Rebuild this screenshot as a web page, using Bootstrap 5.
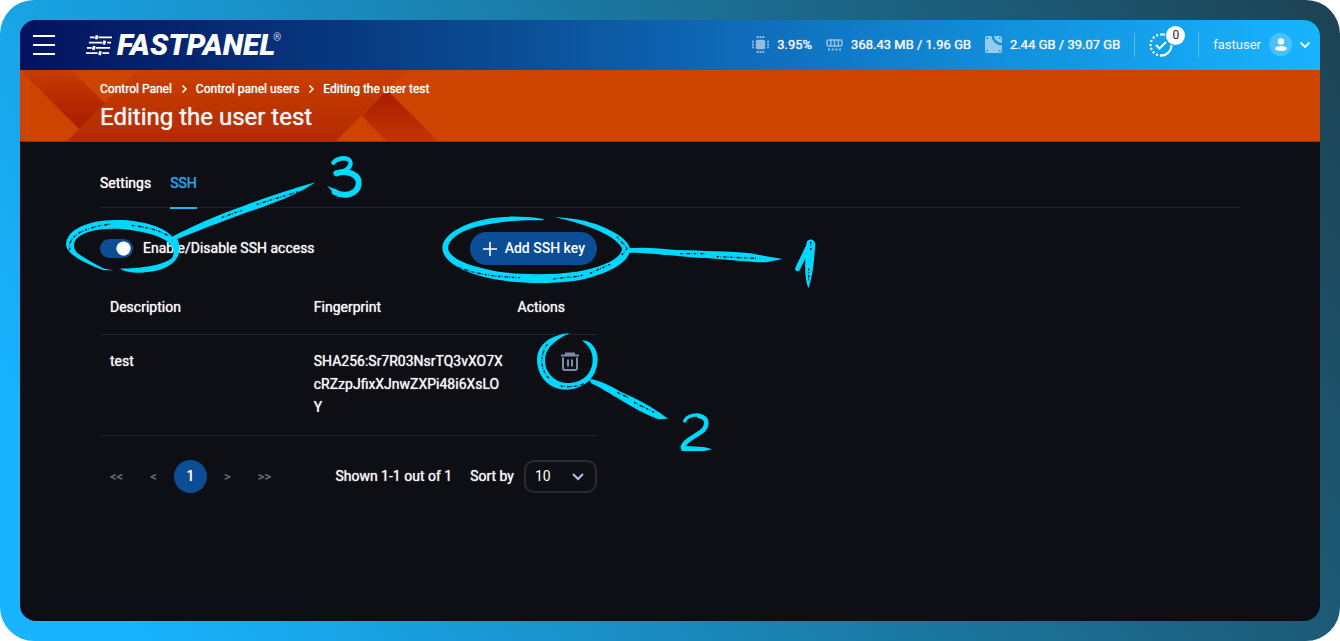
<!DOCTYPE html>
<html lang="en">
<head>
<meta charset="utf-8">
<meta name="viewport" content="width=device-width, initial-scale=1">
<title>Editing the user test</title>
<link href="https://cdn.jsdelivr.net/npm/bootstrap@5.3.0/dist/css/bootstrap.min.css" rel="stylesheet">
<style>
  body { font-family: Roboto, "Liberation Sans", sans-serif; font-size: 14px; font-weight: 400; line-height: 23px; color: #f5f6f8; background: #fff; }
  .frame { min-height: 100vh; padding: 20px; border-radius: 34px; background: linear-gradient(62deg, #18b4ff 8%, #1b77a0 55%, #1d4456 98%); }
  .panel { border-radius: 16px; background: #0e0f14; overflow: hidden; }
  .topbar { height: 50px; padding: 0 10px 1px 13px; font-size: 13px; background: linear-gradient(90deg, #03125e, #0a478c 34%, #0f6cbb 56%, #1292dd 77%, #18b4ff); }
  .wordmark { margin-left: 31px; font-size: 30px; font-weight: 900; font-style: italic; line-height: 32px; color: #fff; text-decoration: none; }
  .wordmark sup { font-size: 10px; font-weight: 400; font-style: normal; top: -14px; margin-left: -2px; opacity: .8; }
  .plain { padding: 0; border: 0; background: none; color: inherit; display: flex; align-items: center; }
  .bold-ink { text-shadow: 0 0 1px currentColor; }
  .stats { gap: 14px; }
  .stat { display: flex; align-items: center; gap: 8px; }
  .stat svg { opacity: .55; }
  .rule { width: 1px; height: 24px; background: rgba(255,255,255,.3); }
  .tasks { margin-right: 11px; }
  .count { position: absolute; left: 17px; top: -7px; width: 19px; height: 19px; border-radius: 50%; background: #fff; color: #222; font-size: 12px; line-height: 19px; text-align: center; }
  .avatar { width: 23px; height: 23px; border-radius: 50%; background: rgba(255,255,255,.22); }
  .banner { height: 72px; padding: 9px 80px 0; background: #cc4400; border-bottom: 1px solid #8f3504; }
  .banner .shapes { position: absolute; left: 0; top: 0; }
  .banner .breadcrumb { font-size: 12px; line-height: 20px; }
  .banner a { color: #fff; text-decoration: none; }
  .banner h1 { font-size: 24px; font-weight: 400; line-height: 36px; }
  .content { padding: 30px 80px 0; }
  .tabs { border-bottom: 1px solid #20232a; gap: 19px; }
  .tabs .nav-link { padding: 0 0 12px; color: #fff; border-bottom: 2px solid transparent; margin-bottom: -2px; }
  .tabs .nav-link.active { color: #22a9f0; border-color: #22b4f5; }
  .keys { max-width: 497px; }
  .access { padding: 0; min-height: 0; margin: 0; gap: 10px; }
  .access .form-check-input { width: 33px; height: 19px; margin: 0; border: 0; float: none; }
  .access .form-check-input:checked { background-color: #0b4e96; background-size: 19px; background-position: right center; }
  .btn-key { height: 33px; padding: 0 12px 0 13px; border-radius: 17px; background: #0b4e96; color: #fff; font-size: 14px; font-weight: 500; line-height: 23px; border: 0; }
  .btn-key:hover { background: #0d5cb0; color: #fff; }
  .keytable { table-layout: fixed; --bs-table-bg: transparent; --bs-table-color: #f5f6f8; border-color: #20232a; }
  .keytable th { font-weight: 400; padding: 15px 10px; }
  .keytable td { padding: 15px 10px 16px; }
  .keytable .print { padding-right: 3px; word-break: break-all; }
  .keytable > tbody { border-top: 0; }
  .pages { gap: 4px; }
  .pages .page-link { width: 33px; height: 33px; padding: 0; border: 0; border-radius: 50%; background: transparent; color: #686e7b; font-size: 13px; line-height: 33px; text-align: center; }
  .pages .active .page-link { background: #0b4e96; color: #fff; font-size: 14px; }
  .sortby { margin: 0 10px 0 18px; }
  .form-select.perpage { width: 73px; height: 33px; padding: 0 9px; border: 2px solid #262b36; border-radius: 10px; color: #fff; font-size: 14px; font-weight: 400; background-color: transparent; background-position: right 10px center; background-size: 14px; background-image: url("data:image/svg+xml,%3Csvg xmlns='http://www.w3.org/2000/svg' viewBox='0 0 14 14'%3E%3Cpath d='M2 4l5 5 5-5' fill='none' stroke='%23b4c4e6' stroke-width='2'/%3E%3C/svg%3E"); }
  .note { position: absolute; pointer-events: none; z-index: 2; max-width: none; overflow: visible; fill: #00d8ff; }
  .note .ink { fill: none; stroke: #00d8ff; stroke-linecap: round; stroke-linejoin: round; }
  .note .grit { fill: none; stroke: #0e1820; stroke-width: 4; stroke-dasharray: 7 4 2 6 11 3 3 5; }
  .note-one { left: -40px; top: -27px; }
  .note-two { left: -54px; top: -25px; }
  .note-three { left: -40px; top: -87px; }
</style>
</head>
<body>
<div class="frame d-flex">
<div class="panel flex-grow-1">
  <header class="topbar d-flex align-items-center">
    <button class="plain" type="button" aria-label="Menu">
      <svg width="22" height="20" fill="none" stroke="#fff" stroke-width="2"><path d="M0 1h22M0 10h22M0 19h22"/></svg>
    </button>
    <a href="#" class="wordmark d-flex align-items-center">
      <svg class="me-1" width="27" height="22" viewBox="0 0 28 22" fill="none" stroke="#fff"><path stroke-width="1.8" d="M4 3h5M13 3h14M3 8.500h14M22 8.500h4M1 14h5M10 14h15M0 19.500h12M17 19.500h7"/><path stroke-width="2.800" d="M11.500 1l-1 4M19.500 6.500l-1 4M8.500 12l-1 4M15 17.500l-1 4"/></svg>
      <span>FASTPANEL<sup>®</sup></span>
    </a>
    <div class="stats ms-auto d-flex align-items-center bold-ink">
      <span class="stat">
        <svg width="17" height="17" viewBox="0 0 18 18" fill="#fff"><rect x="4" y="4" width="10" height="10" rx="2"/><path d="M5 0h2v2H5zM8 0h2v2H8zM11 0h2v2h-2zM5 16h2v2H5zM8 16h2v2H8zM11 16h2v2h-2zM0 5h2v2H0zM0 8h2v2H0zM0 11h2v2H0zM16 5h2v2h-2zM16 8h2v2h-2zM16 11h2v2h-2z"/></svg>
        3.95%
      </span>
      <span class="stat">
        <svg width="17" height="12" viewBox="0 0 17 12" fill="none" stroke="#fff" stroke-width="1.500"><rect x="1" y="1" width="15" height="6" rx="1.500"/><path d="M4.700 1v6M8.500 1v6M12.300 1v6"/><path stroke-width="2" stroke-dasharray="2 1.700" d="M2 10.500h13"/></svg>
        368.43 MB / 1.96 GB
      </span>
      <span class="stat">
        <svg width="17" height="17" viewBox="0 0 17 17"><path fill="#fff" fill-rule="evenodd" d="M2 0h4.500c.5 5 4.500 9 10.500 9.500V15a2 2 0 0 1-2 2H2a2 2 0 0 1-2-2V2a2 2 0 0 1 2-2zM9 0h6a2 2 0 0 1 2 2v5C12.500 6.500 9.500 4 9 0zM1.500 1.500v1.500h1.500v-1.500zM14 1.500v1.500h1.500v-1.500zM14 14v1.500h1.500V14zM1.500 14v1.500h1.500V14z"/></svg>
        2.44 GB / 39.07 GB
      </span>
      <span class="rule"></span>
      <button class="plain tasks position-relative" type="button" aria-label="Tasks">
        <svg width="24" height="24" viewBox="0 0 24 24" fill="none" stroke="#fff" stroke-width="2"><path d="M12 22.500A10.500 10.500 0 0 0 22.500 12"/><path stroke-linecap="round" stroke-dasharray=".1 4" stroke-width="2.400" d="M12 22.500A10.500 10.500 0 0 1 10 1.700"/><path d="M11 1.500h5M7 12l3.500 3.500L17 9"/></svg>
        <span class="count">0</span>
      </button>
      <span class="rule"></span>
      <button class="plain" type="button">
        <span>fastuser</span>
        <span class="avatar d-flex align-items-center justify-content-center ms-2"><svg width="12" height="13" fill="#fff"><circle cx="6" cy="3.500" r="3.200"/><ellipse cx="6" cy="10.500" rx="6" ry="2.500"/></svg></span>
        <svg class="ms-2" width="10" height="8" fill="none" stroke="#fff" stroke-width="1.800"><path d="M.500 1.500L5 6l4.500-4.500"/></svg>
      </button>
    </div>
  </header>

  <section class="banner position-relative bold-ink">
    <svg class="shapes" width="420" height="71" viewBox="0 0 420 71">
      <defs>
        <linearGradient id="fold" x1="0" y1="0" x2="0" y2="1"><stop stop-color="#c63c00"/><stop offset="1" stop-color="#a81b00"/></linearGradient>
        <linearGradient id="band" x1="0" y1="0" x2="0" y2="1"><stop stop-color="#c83f00"/><stop offset="1" stop-color="#b42a00"/></linearGradient>
        <linearGradient id="tail" x1="0" y1="0" x2="0" y2="1"><stop stop-color="#a81b00"/><stop offset="1" stop-color="#c03500"/></linearGradient>
      </defs>
      <path fill="url(#fold)" d="M0 0h51l34 33-26 26z"/>
      <path fill="url(#band)" d="M118 0h269l-71 71H47z"/>
      <path fill="url(#tail)" d="M342 46l25-26 51 51h-51z"/>
    </svg>
    <div class="position-relative">
      <ol class="breadcrumb mb-0 align-items-center">
        <li><a href="#">Control Panel</a></li>
        <li class="d-flex align-items-center"><svg class="mx-2" width="8" height="8" fill="none" stroke="#fff" stroke-width="1.500"><path d="M2.500.500L6 4 2.500 7.500"/></svg><a href="#">Control panel users</a></li>
        <li class="d-flex align-items-center"><svg class="mx-2" width="8" height="8" fill="none" stroke="#fff" stroke-width="1.500"><path d="M2.500.500L6 4 2.500 7.500"/></svg><a href="#" aria-current="page">Editing the user test</a></li>
      </ol>
      <h1 class="m-0">Editing the user test</h1>
    </div>
  </section>

  <main class="content bold-ink">
    <nav class="nav tabs">
      <a class="nav-link" href="#">Settings</a>
      <a class="nav-link active" href="#">SSH</a>
    </nav>
    <div class="keys">
      <div class="d-flex align-items-center justify-content-between mt-4">
        <div class="form-check form-switch access d-flex align-items-center position-relative">
          <input class="form-check-input" type="checkbox" role="switch" id="ssh-access" checked>
          <label for="ssh-access">Enable/Disable SSH access</label>
          <svg class="note note-three" width="320" height="130" viewBox="0 0 960 390" aria-hidden="true">
            <path d="M160 361L130 361C90 345 22 318 18 285C18 238 85 211 165 210C250 209 318 234 336 260C420 218 460 200 560 164C620 142 690 118 766 97C730 122 690 142 600 174C540 194 490 214 400 248L352 267C372 310 350 362 245 368C220 369 195 365 180 356C215 356 300 352 335 325C350 300 335 275 290 258C225 236 140 229 85 246C34 262 30 298 62 316C85 331 110 345 133 356Z"/>
            <path class="grit" d="M30 300C20 262 65 232 155 222M215 226C265 232 300 242 325 258M485 203L545 181M590 163C630 151 680 135 720 124"/>
            <path class="ink" stroke-width="13" d="M820 38C836 21 872 19 872 40C870 58 848 67 830 68"/>
            <path class="ink" stroke-width="18" d="M829 70C862 58 900 75 896 103C892 133 852 143 824 126"/>
            <path d="M802 108L832 120L826 135Z"/>
          </svg>
        </div>
        <div class="position-relative">
          <button class="btn btn-key d-flex align-items-center" type="button">
            <svg class="me-2" width="14" height="14" fill="none" stroke="#fff" stroke-width="1.600"><path d="M7 0v14M0 7h14"/></svg>Add SSH key
          </button>
          <svg class="note note-one" width="400" height="90" viewBox="0 0 1200 270" aria-hidden="true">
            <path d="M340 42C260 30 190 33 130 52C70 72 37 100 37 130C40 175 110 205 180 220C260 238 380 238 450 225C540 205 602 170 600 130C590 90 500 52 440 43L372 35L430 50C490 68 560 95 576 130C576 160 520 186 440 200C360 211 260 210 190 197C110 182 57 158 54 130C54 105 85 80 140 65C200 50 260 44 340 46Z"/>
            <path d="M590 130C640 125 690 130 740 135C820 138 900 138 960 145L1058 162L1010 172C950 172 880 160 800 158C720 152 650 142 596 143Z"/>
            <path class="grit" d="M85 187C140 208 200 216 270 218M370 222C410 215 440 217 460 210M480 205L540 178M560 95L590 128M750 146H825M860 155L980 160M575 150L592 130"/>
            <path class="ink" stroke-width="15" d="M1103 191L1139 116"/>
            <path d="M1130 113C1132 98 1157 100 1156 120C1152 160 1150 210 1135 250C1122 215 1124 170 1130 113Z"/>
            <path class="grit" d="M1142 110V135M1136 190V230"/>
          </svg>
        </div>
      </div>

      <table class="table keytable mb-0 mt-3">
        <colgroup><col style="width:41%"><col style="width:41%"><col></colgroup>
        <thead><tr><th>Description</th><th>Fingerprint</th><th>Actions</th></tr></thead>
        <tbody><tr>
          <td>test</td>
          <td class="print">SHA256:Sr7R03NsrTQ3vXO7XcRZzpJfixXJnwZXPi48i6XsLOY</td>
          <td>
            <div class="d-flex justify-content-end">
            <div class="position-relative">
              <button class="plain px-2" type="button" aria-label="Delete key">
                <svg width="18" height="23" viewBox="0 0 18 23" fill="none" stroke="#7f8aa5" stroke-width="2"><path d="M0 5.500h18M5 5V3.500h8V5M2 7.500V18q0 2 2 2h10q2 0 2-2V7.500M7 9.500v7M11 9.500v7"/></svg>
              </button>
              <svg class="note note-two" width="240" height="140" viewBox="0 0 720 420" aria-hidden="true">
                <path d="M213 24C150 30 115 60 114 105C115 155 150 193 200 194C260 193 296 155 296 100C294 70 275 43 250 47C270 62 281 80 281 105C280 150 245 175 205 174C165 173 137 140 138 105C138 75 160 48 213 24Z"/>
                <path d="M272 162C300 165 330 180 365 200C410 220 450 240 480 262L507 281L480 283C440 270 400 245 370 228C330 205 300 185 276 175Z"/>
                <path class="grit" d="M145 58C125 85 120 130 150 160M185 183C215 187 235 185 255 176M355 202L388 218M405 232L465 262"/>
                <path class="ink" stroke-width="10" d="M557 288C566 268 595 268 608 273"/>
                <path class="ink" stroke-width="14" d="M600 273C634 278 625 312 598 326C580 338 552 352 552 368"/>
                <path d="M545 362L615 366L640 373L615 378H548Z"/>
              </svg>
            </div>
            </div>
          </td>
        </tr></tbody>
      </table>

      <div class="d-flex align-items-center mt-4">
        <nav aria-label="Pages">
          <ul class="pagination pages m-0">
            <li><a class="page-link" href="#">&lt;&lt;</a></li>
            <li><a class="page-link" href="#">&lt;</a></li>
            <li class="active"><a class="page-link" href="#">1</a></li>
            <li><a class="page-link" href="#">&gt;</a></li>
            <li><a class="page-link" href="#">&gt;&gt;</a></li>
          </ul>
        </nav>
        <span class="ms-auto">Shown 1-1 out of 1</span>
        <label class="sortby" for="per-page">Sort by</label>
        <select class="form-select perpage" id="per-page"><option>10</option><option>25</option><option>50</option></select>
      </div>
    </div>
  </main>
</div>
</div>
<script src="https://cdn.jsdelivr.net/npm/bootstrap@5.3.0/dist/js/bootstrap.bundle.min.js"></script>
</body>
</html>
